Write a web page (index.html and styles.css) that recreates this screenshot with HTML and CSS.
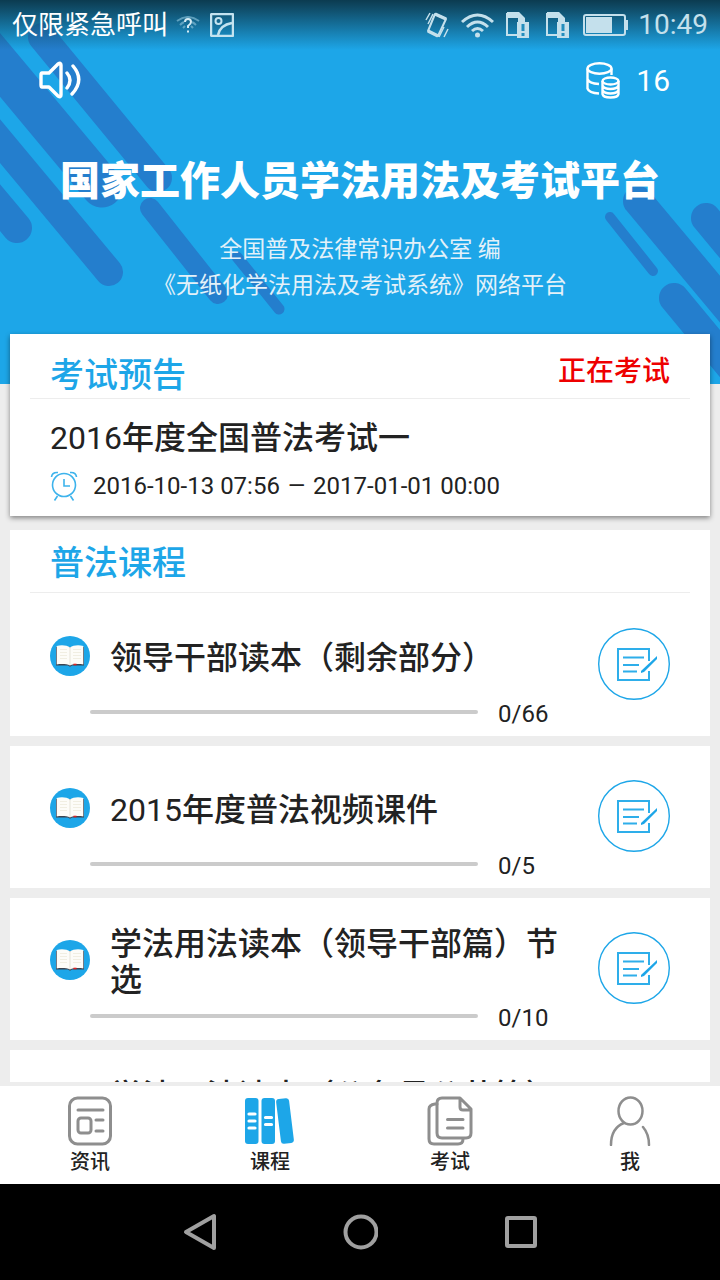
FILE: index.html
```html
<!DOCTYPE html>
<html lang="zh-CN">
<head>
<meta charset="utf-8">
<meta name="viewport" content="width=device-width, initial-scale=1">
<title>国家工作人员学法用法及考试平台</title>
<link rel="stylesheet" href="styles.css">
</head>
<body>
<svg class="sprite" aria-hidden="true">
  <symbol id="book" viewBox="0 0 40 40">
    <circle cx="20" cy="20" r="20" fill="#1da6e8"/>
    <path d="M6 11v18.500h12l2 1.200 2-1.200h12V11z" fill="#3b4350"/>
    <path d="M6.700 10C11 8.500 17 9 20 11.500 23 9 29 8.500 33.300 10V28.500C29 27.800 23 28 20 29.500 17 28 11 27.800 6.700 28.500z" fill="#fdfcf8"/>
    <path d="M20 12v17" stroke="#e6e3d8"/>
    <path d="M10 13.500h7M10 16.500h7M10 19.500h7M10 22.500h7M23 13.500h8M23 16.500h8M23 19.500h8M23 22.500h8" stroke="#f1eee2"/>
    <path d="M23.500 28.500h3" stroke="#e02020" stroke-width="1.600"/>
  </symbol>
  <symbol id="edit" viewBox="0 0 72 72">
    <circle cx="36" cy="36" r="35.300" fill="none" stroke="#1da6e8" stroke-width="1.400"/>
    <g fill="none" stroke="#2eaeea" stroke-width="2">
      <path d="M51 33V21H20V52H51V43"/>
      <path d="M25 29.500H46M25 37H41M25 43.500H39"/>
    </g>
    <path d="M43 45V43L59 28v3L46 44z" fill="#1da6e8"/>
  </symbol>
  <symbol id="sim" viewBox="0 0 24 26">
    <path d="M1 1h11l6 6v3M1 1v22h10" fill="none" stroke="currentColor" stroke-width="2"/>
    <path d="M1 0h12l6 6v4h-7V6H1z" fill="currentColor"/>
    <path d="M11 10h12v16H11z" fill="currentColor"/>
    <path d="M17 12v7M17 21v3" stroke="#238dbd" stroke-width="3"/>
  </symbol>
</svg>

<main class="screen">
  <header class="hero">
    <svg class="stripes" viewBox="0 0 720 384" preserveAspectRatio="xMidYMin slice" aria-hidden="true">
      <g stroke="#247ecd" stroke-linecap="round">
        <path d="M-40 160L17 228" stroke-width="30"/>
        <path d="M-40 93L109 272" stroke-width="28"/>
        <path d="M-40 17L102 187" stroke-width="41"/>
        <path d="M42 37L158 178" stroke-width="28"/>
        <path d="M150 208L218 294" stroke-width="20"/>
        <path d="M237 257L279 309" stroke-width="11"/>
        <path d="M610 217L653 271" stroke-width="10"/>
        <path d="M638 201L740 323" stroke-width="30"/>
        <path d="M706 218L760 283" stroke-width="30"/>
        <path d="M674 298L741 379" stroke-width="30"/>
      </g>
    </svg>
    <div class="status">
      <span class="carrier">仅限紧急呼叫</span>
      <svg class="no-net" width="24" height="18" viewBox="0 0 24 18" fill="none" stroke="#7fb9d3" stroke-width="2" aria-hidden="true">
        <path d="M1 5Q12-3 23 5M4 9Q6 7 8 6M16 6Q18 7 20 9M7 12l2-2M15 10l2 2" opacity=".7"/>
        <path d="M9 6Q9 3 12 3T15 6Q15 8 12 10V12M12 14.500v2" stroke="#d6ecf5"/>
      </svg>
      <svg width="24" height="24" viewBox="0 0 24 24" fill="none" stroke="#c4e3f0" stroke-width="2" aria-hidden="true">
        <rect x="1" y="1" width="22" height="22" rx="1" stroke-width="2.500"/><circle cx="8.500" cy="8" r="3"/><path d="M8 22Q10 12 22 10" stroke-width="2.500"/>
      </svg>
      <span class="spacer"></span>
      <svg width="24" height="26" viewBox="0 0 24 26" fill="none" stroke="currentColor" aria-hidden="true">
        <path d="M10 2L21 7L13 24L3 19z" stroke-width="2" stroke-linejoin="round"/><path d="M10 2L21 7M3 19l10 5" stroke-width="3.500"/>
        <path d="M5 1L1 8M8 2L3 12M19 15l-5 10M23 17l-4 8" stroke-width="1.500"/>
      </svg>
      <svg class="wifi" width="33" height="25" viewBox="0 0 33 25" fill="none" stroke="currentColor" stroke-width="3" aria-hidden="true">
        <path d="M1 9Q16.500-5 32 9M6 14Q16.500 4 27 14M11 18Q16.500 13 22 18"/><circle cx="16.500" cy="22" r="2.500" fill="currentColor" stroke="none"/>
      </svg>
      <svg class="sim" width="24" height="26" aria-hidden="true"><use href="#sim"/></svg>
      <svg class="sim" width="24" height="26" aria-hidden="true"><use href="#sim"/></svg>
      <svg class="battery" width="45" height="24" viewBox="0 0 45 24" aria-hidden="true">
        <rect x="1" y="2" width="41" height="20" rx="2" fill="none" stroke="currentColor" stroke-width="2"/>
        <path d="M3 4h26v16H3zM42 7h3v10h-3z" fill="currentColor"/>
      </svg>
      <time class="clock">10:49</time>
    </div>
    <div class="tools">
      <button class="plain" aria-label="声音">
        <svg width="42" height="40" viewBox="0 0 42 40" fill="none" stroke="#fff" stroke-width="3.400" stroke-linecap="round" stroke-linejoin="round">
          <path d="M3 13Q2 13 2 15V25Q2 27 3 27H10L19 36Q22 38 22 35V5Q22 2 19 4L10 13z"/>
          <path d="M28 13Q34 20 28 28M34 6Q46 20 33 34"/>
        </svg>
      </button>
      <button class="plain coins">
        <svg width="34" height="37" viewBox="0 0 34 37" fill="none" stroke="#fff" stroke-width="2.400" aria-hidden="true">
          <ellipse cx="13.500" cy="6.500" rx="12" ry="5.200"/>
          <path d="M1.500 6.500V26.500Q3 31 13 31.500M1.500 17Q3 21.500 13 22M25.500 6.500V13"/>
          <ellipse cx="24.500" cy="19" rx="8" ry="3.500"/>
          <path d="M16.500 19V32Q17 35.500 24.500 35.500T32.500 32V19M16.500 23.500Q18 27 24.500 27T32.500 23.500M16.500 28Q18 31.500 24.500 31.500T32.500 28"/>
        </svg>
        <span>16</span>
      </button>
    </div>
    <h1>国家工作人员学法用法及考试平台</h1>
    <p class="subtitle">全国普及法律常识办公室 编<br>《无纸化学法用法及考试系统》网络平台</p>
  </header>

  <section class="card exam">
    <div class="exam-head">
      <h2>考试预告</h2>
      <span class="state">正在考试</span>
    </div>
    <h3><span class="year">2016</span>年度全国普法考试一</h3>
    <p class="period">
      <svg width="28" height="30" viewBox="0 0 28 30" fill="none" stroke="#3db3ec" stroke-width="1.600" aria-hidden="true">
        <circle cx="14" cy="14" r="11.500"/><path d="M14 8v7h6M1.500 6Q2 1 8 1.500M26.500 6Q26 1 20 1.500M7.500 25L4.500 29.500M20.500 25l3 4.500"/>
      </svg>
      <time>2016-10-13 07:56</time><span>—</span><time>2017-01-01 00:00</time>
    </p>
  </section>

  <section class="courses">
    <div class="card">
      <h2 class="courses-head">普法课程</h2>
      <article class="course">
        <svg class="book" aria-hidden="true"><use href="#book"/></svg>
        <h3>领导干部读本（剩余部分）</h3>
        <button class="plain edit" aria-label="练习"><svg><use href="#edit"/></svg></button>
        <div class="progress"><progress value="0" max="66" aria-label="学习进度"></progress><span>0/66</span></div>
      </article>
    </div>
    <article class="card course">
      <svg class="book" aria-hidden="true"><use href="#book"/></svg>
      <h3><span class="year">2015</span>年度普法视频课件</h3>
      <button class="plain edit" aria-label="练习"><svg><use href="#edit"/></svg></button>
      <div class="progress"><progress value="0" max="5" aria-label="学习进度"></progress><span>0/5</span></div>
    </article>
    <article class="card course">
      <svg class="book" aria-hidden="true"><use href="#book"/></svg>
      <h3>学法用法读本（领导干部篇）节选</h3>
      <button class="plain edit" aria-label="练习"><svg><use href="#edit"/></svg></button>
      <div class="progress"><progress value="0" max="10" aria-label="学习进度"></progress><span>0/10</span></div>
    </article>
    <article class="card course">
      <svg class="book" aria-hidden="true"><use href="#book"/></svg>
      <h3>学法用法读本（公务员公共篇）节选</h3>
    </article>
  </section>
</main>

<nav class="tabs">
  <a href="#news">
    <svg viewBox="0 0 50 50" fill="none" stroke="#8e8e8e" stroke-width="3" stroke-linecap="round">
      <rect x="4.500" y="2" width="41" height="46" rx="8"/><path d="M13 14H38M31 24h7M31 35h7"/><rect x="13" y="22" width="13" height="15" rx="3"/>
    </svg>
    <span>资讯</span>
  </a>
  <a href="#courses" aria-current="page">
    <svg viewBox="0 0 50 50" fill="#1da6e8">
      <rect y="2" width="13.500" height="46" rx="3"/><rect x="16.500" y="2" width="13.500" height="46" rx="3"/><rect x="33.500" y="2.500" width="13" height="45" rx="3" transform="rotate(-7 40 25)"/>
      <path d="M4 18h6M4 25h6M4 32h6M20.500 21.500h6M20.500 28.500h6" stroke="#fff" stroke-width="3.200" stroke-linecap="round"/>
    </svg>
    <span>课程</span>
  </a>
  <a href="#exams">
    <svg viewBox="0 0 50 50" fill="none" stroke="#8e8e8e" stroke-width="3" stroke-linecap="round" stroke-linejoin="round">
      <path d="M12 8H10Q4 9 4 13V43Q4 48 9 48H33Q38 48 38 43"/>
      <path d="M17 2H35L46 13V37Q46 42 41 42H17Q12 42 12 37V7Q12 2 17 2zM35 2V11Q35 14 38 14H46"/>
      <path d="M22.500 23.500H38M22.500 32H38"/>
    </svg>
    <span>考试</span>
  </a>
  <a href="#me">
    <svg viewBox="0 0 50 50" fill="none" stroke="#8e8e8e" stroke-width="2.500" stroke-linecap="round">
      <ellipse cx="25.500" cy="15" rx="12" ry="13.500"/><path d="M19 27Q6 32 6 49M38 31Q44 38 44 49"/>
    </svg>
    <span>我</span>
  </a>
</nav>
<div class="system">
  <button class="plain" aria-label="返回"><svg width="36" height="40" viewBox="0 0 36 40"><path d="M4 20L32 4V36z"/></svg></button>
  <button class="plain" aria-label="主页"><svg width="36" height="40" viewBox="0 0 36 40"><circle cx="19" cy="20" r="15.500"/></svg></button>
  <button class="plain" aria-label="最近任务"><svg width="36" height="40" viewBox="0 0 36 40"><rect x="5" y="6" width="28" height="28" rx="1"/></svg></button>
</div>
</body>
</html>
```

FILE: styles.css
```css
* { box-sizing: border-box; }

body {
  display: flex;
  flex-direction: column;
  height: 100vh;
  margin: 0;
  background: #ededed;
  color: #222;
  font-family: Roboto, "Noto Sans CJK SC", sans-serif;
}

h1, h2, h3, p { margin: 0; font-weight: 400; }
svg { display: block; flex: none; }
.sprite { position: absolute; width: 0; height: 0; }

.plain {
  padding: 0;
  border: 0;
  background: none;
  color: inherit;
  font: inherit;
}

.screen {
  flex: 1;
  min-height: 0;
  overflow: hidden;
}

.hero {
  position: relative;
  height: 384px;
  overflow: hidden;
  background: #1da6e8;
  color: #fff;
  text-align: center;
}

.stripes {
  position: absolute;
  inset: 0;
  width: 100%;
  height: 100%;
}

.status, .tools, h1, .subtitle { position: relative; }

.status {
  display: flex;
  align-items: center;
  height: 50px;
  padding: 0 12px;
  background: linear-gradient(#0b3b50, #0f4a65 15%, rgba(29, 166, 232, 0));
  color: #c4e0ec;
}

.carrier { margin-right: 8px; color: #fff; font-size: 26px; line-height: 50px; }
.no-net { margin-right: 10px; }
.spacer { flex: 1; }
.wifi { margin-left: 12px; }
.sim { margin-left: 12px; }
.sim + .sim { margin-left: 16px; }
.battery { margin-left: 13px; }
.clock { margin-left: 10px; font-size: 28px; line-height: 50px; }

.tools {
  display: flex;
  justify-content: space-between;
  align-items: center;
  height: 60px;
  padding: 0 50px 0 39px;
}

.coins { display: flex; align-items: center; gap: 16px; font-size: 30px; }

h1 {
  margin-top: 42px;
  font-size: 40px;
  font-weight: 900;
  line-height: 60px;
  white-space: nowrap;
}

.subtitle {
  margin-top: 20px;
  color: #e3f1f9;
  font-size: 23px;
  line-height: 36px;
}

.card { background: #fff; }

h2 { color: #1da6e8; font-size: 34px; font-weight: 500; line-height: 40px; }
h3 { font-size: 32px; font-weight: 500; }
.year { font-weight: 400; }

.exam {
  position: relative;
  margin: -50px 10px 14px;
  padding: 0 20px 15px;
  box-shadow: 0 2px 5px rgba(0, 0, 0, .45);
}

.exam-head {
  display: flex;
  justify-content: space-between;
  align-items: flex-start;
  height: 65px;
  padding: 21px 20px 0;
  border-bottom: 1px solid #ededed;
}

.state { color: #e00; font-size: 28px; font-weight: 500; line-height: 34px; }
.exam h3 { margin: 19px 20px 13px; line-height: 40px; }

.period {
  display: flex;
  align-items: center;
  padding: 0 20px;
  font-size: 24px;
  line-height: 30px;
}

.period time:first-of-type { margin-left: 15px; }
.period span { margin: 0 8px; font-size: 22px; }

.courses {
  display: flex;
  flex-direction: column;
  gap: 10px;
  margin: 0 10px;
}

.courses-head {
  margin: 0 20px 1px;
  padding: 13px 20px 9px;
  border-bottom: 1px solid #ededed;
}

.course {
  display: grid;
  grid-template-columns: 40px 1fr 72px;
  grid-template-rows: 76px 40px;
  column-gap: 20px;
  align-items: center;
  padding: 24px 40px 2px;
}

.course h3 { padding-top: 4px; line-height: 36px; }
.book { width: 40px; height: 40px; }
.edit { grid-row: 1 / 3; grid-column: 3; align-self: start; margin-top: 10px; }
.edit svg { width: 72px; height: 72px; }

.progress {
  display: flex;
  grid-row: 2;
  grid-column: 1 / 3;
  align-items: center;
  gap: 20px;
  padding-left: 40px;
  font-size: 24px;
}

.progress span { flex: 0 0 80px; line-height: 40px; }

progress {
  flex: 1;
  min-width: 0;
  height: 4px;
  margin-bottom: 4px;
  border: 0;
  border-radius: 2px;
  background: #cbcbcb;
  appearance: none;
  overflow: hidden;
}

progress::-webkit-progress-bar { background: #cbcbcb; }
progress::-webkit-progress-value { background: #1da6e8; }

.tabs {
  display: flex;
  height: 102px;
  border-top: 4px solid #ededed;
  background: #fff;
}

.tabs a {
  display: flex;
  flex: 1;
  flex-direction: column;
  align-items: center;
  gap: 4px;
  padding-top: 10px;
  color: #222;
  font-size: 20px;
  font-weight: 500;
  line-height: 24px;
  text-decoration: none;
}

.tabs svg { width: 50px; height: 50px; }

.system {
  display: flex;
  justify-content: center;
  align-items: center;
  gap: 124px;
  height: 96px;
  background: #000;
}

.system svg { fill: none; stroke: #a0a0a0; stroke-width: 4; stroke-linejoin: round; }
```
